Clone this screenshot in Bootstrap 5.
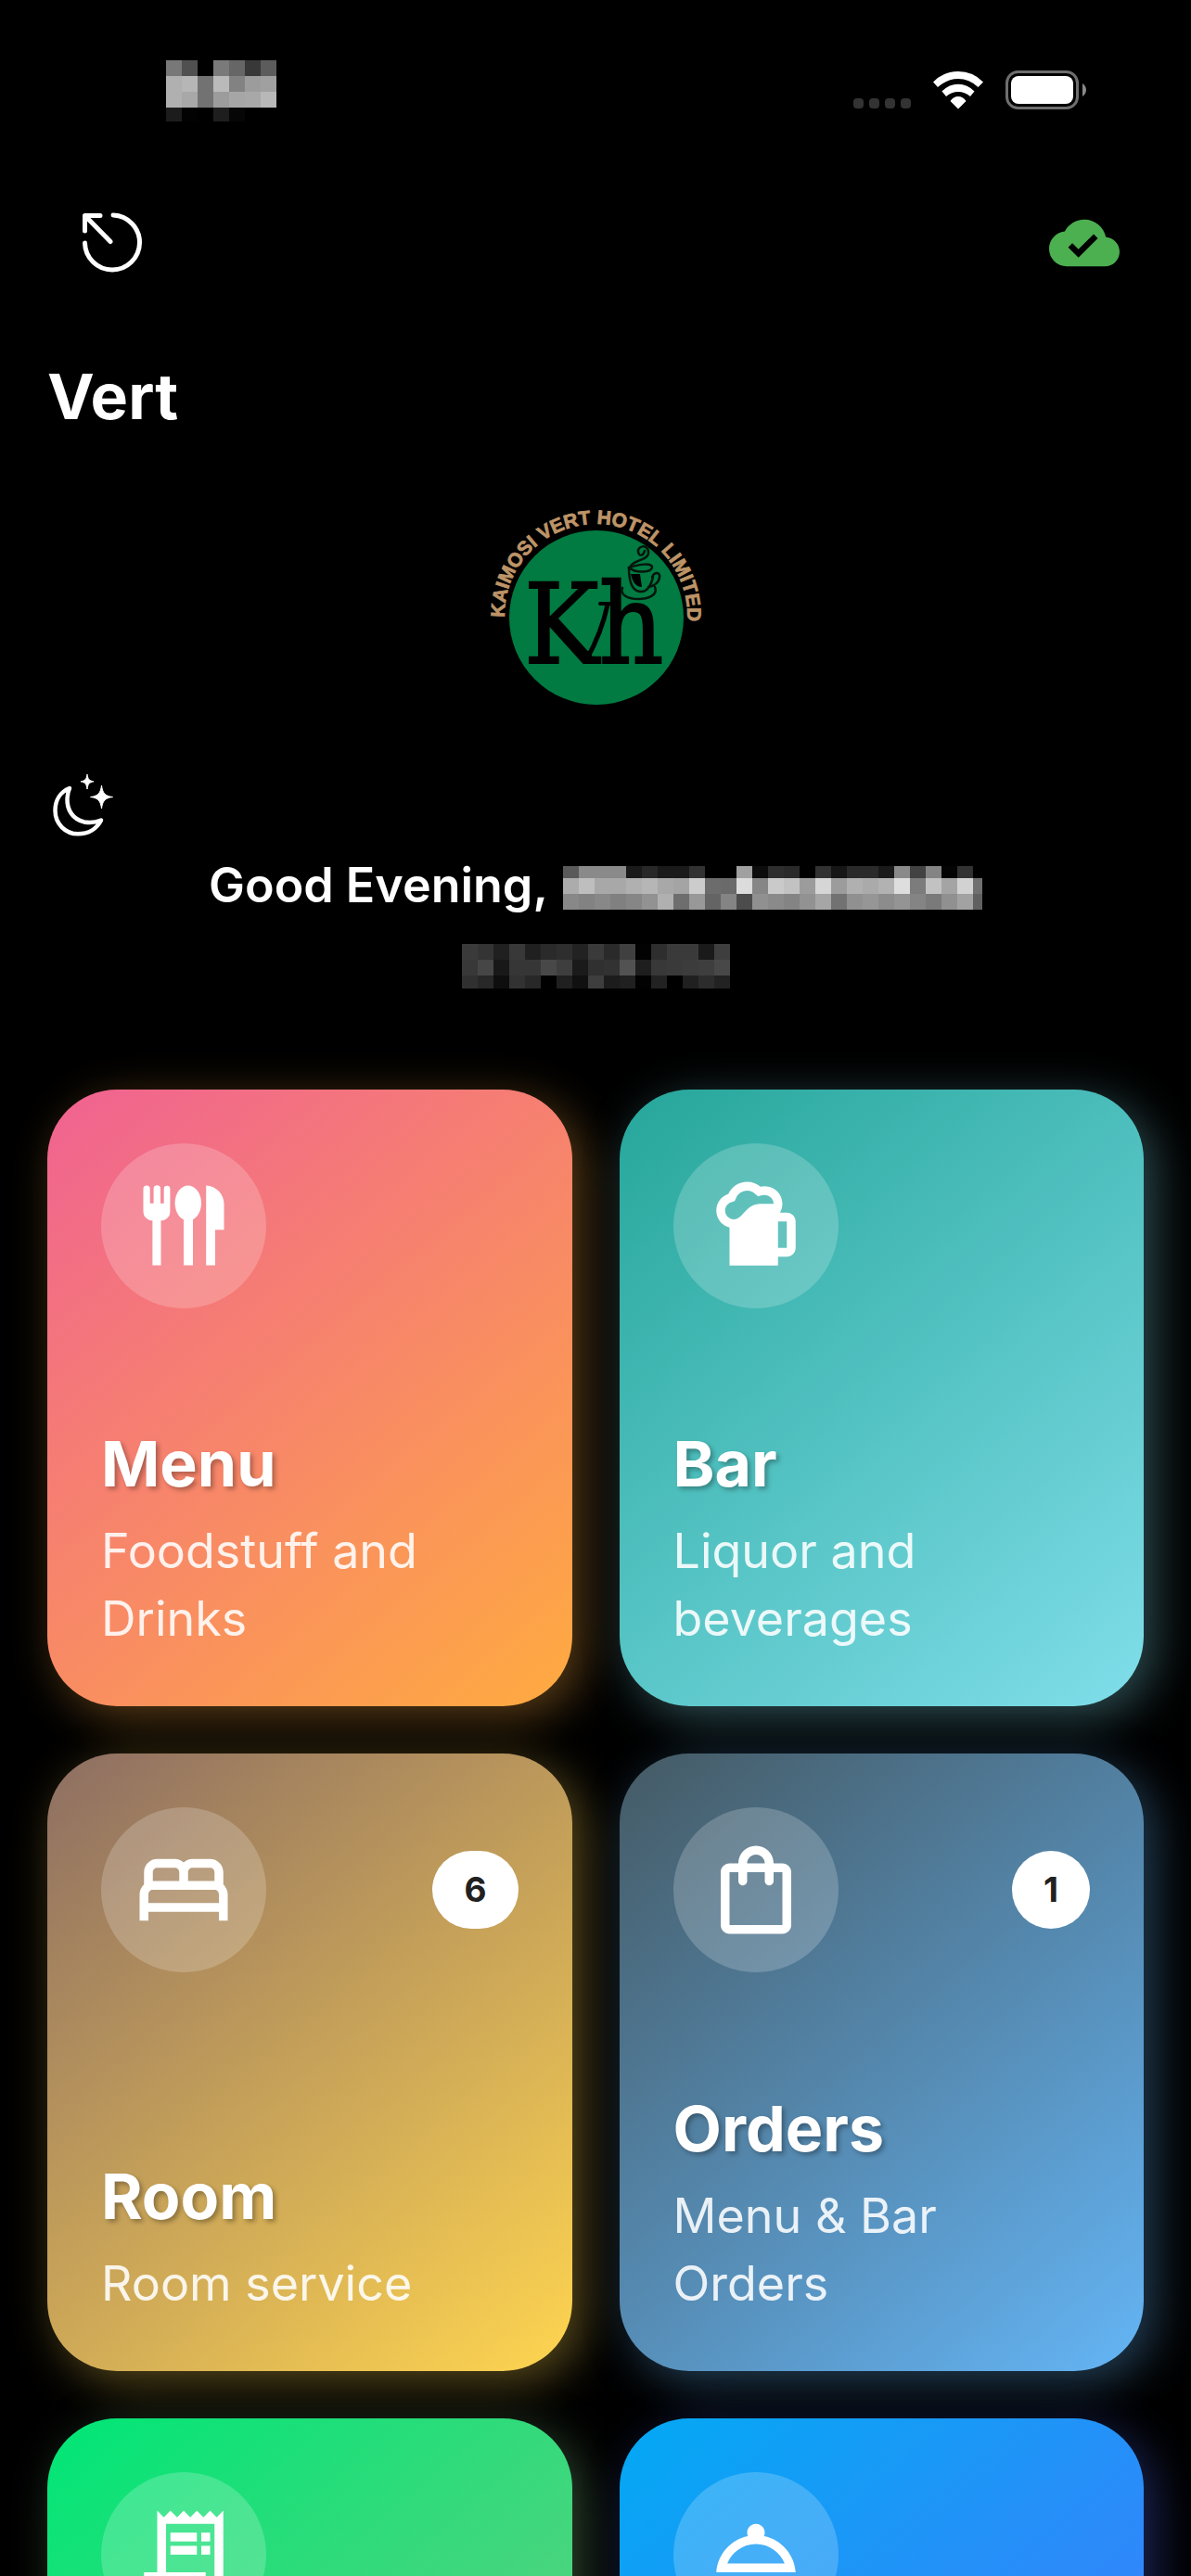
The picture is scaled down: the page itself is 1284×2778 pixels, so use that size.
<!DOCTYPE html>
<html lang="en" data-bs-theme="dark">
<head>
<meta charset="utf-8">
<meta name="viewport" content="width=device-width, initial-scale=1">
<title>Vert</title>
<link href="https://cdn.jsdelivr.net/npm/bootstrap@5.3.0/dist/css/bootstrap.min.css" rel="stylesheet">
<style>
  body { background: #000; color: #fff; font-family: Inter, "Liberation Sans", sans-serif; }
  svg { display: block; flex: none; }
  .screen { overflow-y: auto; scrollbar-width: none; }
  .screen::-webkit-scrollbar { display: none; }

  .status-bar { padding: 65px 113px 0 179px; }
  .signal { gap: 24px; margin-bottom: 2px; }
  .signal-dots { gap: 6px; margin-bottom: 1px; }
  .signal-dots span { width: 11px; height: 11px; border-radius: 4px; background: #333; }

  .app-bar { padding: 93px 77px 0 85px; }
  .icon-btn { background: none; border: 0; padding: 0; color: #fff; }
  .app-title { margin: 84px 0 0; padding: 0 51px; font-size: 68px; line-height: 86px; font-weight: 700; }
  .brand { margin-top: 60px; }
  .night { margin: 51px 0 0 53px; }
  .greeting { margin-top: 18px; gap: 16px; font-size: 52px; line-height: 61px; font-weight: 600; }
  .greeting svg { margin-top: 6px; }
  .clock { margin-top: 33px; }

  .tiles { padding: 109px 51px 51px; }
  .tiles .row { --bs-gutter-x: 51px; --bs-gutter-y: 51px; }
  .tile {
    --bs-card-border-width: 0;
    aspect-ratio: 17 / 20;
    padding: 58px;
    border-radius: 75px;
    color: #fff;
    text-decoration: none;
    background: linear-gradient(140deg, var(--from), var(--to));
    box-shadow: 12px 12px 50px rgba(var(--glow), .35);
  }
  .tile-menu    { --from: #f06292; --to: #ffab40; --glow: 255, 171, 64; }
  .tile-bar     { --from: #26a69a; --to: #80deea; --glow: 128, 222, 234; }
  .tile-room    { --from: #8d6e63; --to: #ffd54f; --glow: 255, 213, 79; }
  .tile-orders  { --from: #455a64; --to: #64b5f6; --glow: 100, 181, 246; }
  .tile-bills   { --from: #00e676; --to: #81c784; --glow: 129, 199, 132; }
  .tile-service { --from: #03a9f4; --to: #536dfe; --glow: 83, 109, 254; }
  .tile-icon { width: 178px; height: 178px; background: rgba(255, 255, 255, .2); }
  .tile-icon svg { width: 114px; height: 114px; fill: #fff; }
  .tile-count { padding: 19px 34px; border-radius: 42px; background: #fff; color: #212121; font-size: 37px; line-height: 46px; font-weight: 700; }
  .tile-name { margin: 0 0 15px; font-size: 68px; line-height: 86px; font-weight: 700; text-shadow: 3px 3px 5px rgba(0, 0, 0, .3); }
  .tile-note { margin: 0; font-size: 52px; line-height: 73px; font-weight: 400; color: rgba(255, 255, 255, .88); }
</style>
<script src="https://cdn.jsdelivr.net/npm/bootstrap@5.3.0/dist/js/bootstrap.bundle.min.js" defer></script>
</head>
<body>
<div class="screen vh-100">

  <header>
    <div class="status-bar d-flex justify-content-between align-items-center">
      <svg class="mosaic" width="119" height="66" role="img" aria-label="Hidden time" data-rows="17,17,17,15"
           data-shades="78 50 00 7a 66 38 5c|b0 b6 72 ba 82 9c a0|b0 a8 72 9c a6 a8 b8|1c 02 00 1e 06 00 00"></svg>
      <div class="signal d-flex align-items-end">
        <div class="signal-dots d-flex"><span></span><span></span><span></span><span></span></div>
        <svg width="54" height="41" viewBox="0 0 54 41" fill="#fff" role="img" aria-label="Wi-Fi">
          <path d="M0 11.5Q11 0 27 0T54 11.5L48.500 17Q39 8 27 8T5 17Z"/>
          <path d="M9.500 21.500Q17 13.700 27 13.700T44.500 21.500L40 27Q34 22 27 22T14 27Z"/>
          <path d="M18.500 32Q22 27 27 27T35.500 32L27 40.500Z"/>
        </svg>
        <svg width="87" height="42" viewBox="0 0 87 42" role="img" aria-label="Battery full">
          <rect x="1.500" y="1.500" width="76" height="39" rx="12" fill="none" stroke="#6e6e6e" stroke-width="3"/>
          <rect x="6" y="6" width="67" height="30" rx="8" fill="#fff"/>
          <path d="M83 14Q87 17 87 21T83 28Z" fill="#8a8a8a"/>
        </svg>
      </div>
    </div>

    <div class="app-bar d-flex justify-content-between align-items-center">
      <button type="button" class="icon-btn" aria-label="Sign out">
        <svg width="72" height="72" viewBox="0 0 72 72" fill="none" stroke="#fff" stroke-width="5" stroke-linecap="round" stroke-linejoin="round">
          <path d="M37 6A29.500 29.500 0 1 1 6.500 36"/>
          <path d="M23 6.500H6.500V23M7 7L34 34.500"/>
        </svg>
      </button>
      <button type="button" class="icon-btn" aria-label="Synced">
        <svg width="76" height="76" viewBox="0 0 24 24" fill="#4caf50" fill-rule="evenodd">
          <path d="M19.350 10.040C18.670 6.590 15.640 4 12 4 9.110 4 6.600 5.640 5.350 8.040 2.340 8.360 0 10.910 0 14c0 3.310 2.690 6 6 6h13c2.760 0 5-2.240 5-5 0-2.640-2.050-4.780-4.650-4.960zM10 17l-3.500-3.500 1.410-1.410L10 14.170 15.180 9l1.410 1.410L10 17z"/>
        </svg>
      </button>
    </div>
    <h1 class="app-title">Vert</h1>
  </header>

  <main>
    <div class="brand d-flex justify-content-center">
      <svg width="264" height="250" viewBox="0 0 264 250" role="img" aria-label="Kaimosi Vert Hotel Limited">
        <defs><path id="rim" d="M34 136A98.500 98.500 0 1 1 224 170"/></defs>
        <circle cx="133" cy="136" r="94" fill="#017b41"/>
        <text font-family="Liberation Sans, sans-serif" font-weight="700" font-size="21" fill="#bd9467" stroke="#bd9467" stroke-width="0.800"><textPath href="#rim">KAIMOSI VERT HOTEL LIMITED</textPath></text>
        <text x="55" y="185" font-family="DejaVu Serif Condensed, DejaVu Serif, serif" font-stretch="condensed" font-size="120" fill="#000" stroke="#000" stroke-width="2">Kh</text>
        <g fill="none" stroke="#000" stroke-linecap="round">
          <path d="M122 182C132 164 140 146 145 122" stroke-width="5"/>
          <path d="M137 121H150" stroke-width="4"/>
        </g>
        <g fill="none" stroke="#05150c" stroke-width="2.500" stroke-linecap="round">
          <path d="M161 104C158 112 168 116 178 116S200 112 196 103"/>
          <path d="M168 82C168 96 171 107 180 108S193 98 194 92"/>
          <path d="M168 82C176 89 192 87 193 82S180 78 168 82"/>
          <path d="M193 92C196 86 202 87 201 93S194 102 189 103"/>
          <path d="M170 80C176 73 190 74 189 65S177 59 178 65 184 69 185 64"/>
        </g>
        <path d="M170 89H180L182 103Q173 103 170 89Z" fill="#000"/>
      </svg>
    </div>

    <svg class="night" width="75" height="75" viewBox="0 0 75 75" role="img" aria-label="Night">
      <path d="M22 19C12 23 6.500 32 6.500 43C6.500 57.500 17.500 68.300 31 68.300C42.500 68.300 51.500 62.500 56 53.500C50 56 44 56.500 38 55.500C26 53 19 43 19.500 30C19.700 26 20.500 22 22 19Z" fill="none" stroke="#fff" stroke-width="4.500" stroke-linejoin="round"/>
      <path d="M56.500 16C57.500 24 60 27.500 68.500 28.500C60 29.500 57.500 33 56.500 41C55.500 33 53 29.500 44.500 28.500C53 27.500 55.500 24 56.500 16Z" fill="#fff" stroke="#fff"/>
      <path d="M41 4C41.700 9 43 11 48 11.800C43 12.500 41.700 15 41 20C40.300 15 39 12.500 34 11.800C39 11 40.300 9 41 4Z" fill="#fff" stroke="#fff"/>
    </svg>

    <div class="greeting d-flex justify-content-center align-items-center">
      <span>Good Evening,</span>
      <svg class="mosaic" width="452" height="47" role="img" aria-label="Hidden name" data-rows="13,17,17"
           data-shades="5a 8a 8a 8a 1a 28 1a 1a 32 00 00 a0 0c 2e 2a 00 32 16 2a 2a 1a 8a 42 84 04 32 00|ac be a8 a8 b0 b6 a8 a4 cc 6c 6a dc 86 ca c2 9c d6 9c b0 aa b2 de 7c c2 a4 d2 70|88 82 88 80 86 92 b0 6e 98 64 84 4c 90 8a 84 92 a6 72 90 96 8c 94 84 7a 90 a2 60"></svg>
    </div>
    <div class="clock d-flex justify-content-center">
      <svg class="mosaic" width="289" height="48" role="img" aria-label="Hidden clock" data-rows="17,17,14"
           data-shades="3a 34 20 38 20 2a 2e 22 3a 2a 40 02 2e 3a 3a 1a 3e|38 46 18 36 36 48 3e 1a 30 32 52 1e 38 3a 3c 3e 48|30 28 0e 32 28 00 20 10 3e 1c 20 02 22 00 20 2c 22"></svg>
    </div>

    <div class="tiles">
      <div class="row row-cols-2">
        <div class="col">
          <a href="#menu" class="card tile tile-menu justify-content-between">
            <div class="d-flex justify-content-between align-items-center">
              <span class="tile-icon rounded-circle d-flex justify-content-center align-items-center">
                <svg viewBox="3 3 114 114">
                  <path d="M16.500 20A3.600 3.600 0 0 1 23.700 20V35.800H27.600V20A3.700 3.700 0 0 1 35 20V35.800H38.700V20A3.350 3.350 0 0 1 45.400 20V45A9.400 9.400 0 0 1 36 54.200H35.500V102.400H26.400V54.200H26A9.500 9.500 0 0 1 16.500 45Z"/>
                  <ellipse cx="64.800" cy="35.500" rx="14.200" ry="19"/>
                  <path d="M60 50H70V102.400H60ZM84.200 16.600C95 17 103.500 26 103.500 36V64.300H94V102.400H84.200Z"/>
                </svg>
              </span>
            </div>
            <div>
              <h2 class="tile-name">Menu</h2>
              <p class="tile-note">Foodstuff and<br>Drinks</p>
            </div>
          </a>
        </div>
        <div class="col">
          <a href="#bar" class="card tile tile-bar justify-content-between">
            <div class="d-flex justify-content-between align-items-center">
              <span class="tile-icon rounded-circle d-flex justify-content-center align-items-center">
                <svg viewBox="0 0 24 24">
                  <path fill-rule="evenodd" d="M19 9h-1.560C17.790 8.410 18 7.730 18 7c0-2.210-1.790-4-4-4-.34 0-.66.05-.98.13C12.200 2.450 11.160 2.020 10 2.020c-1.890 0-3.510 1.110-4.270 2.710C4.150 5.260 3 6.740 3 8.500c0 1.860 1.280 3.410 3 3.860V21h11v-2h2c1.100 0 2-.9 2-2v-6c0-1.100-.9-2-2-2zM7 10.500c-1.100 0-2-.9-2-2 0-.85.55-1.600 1.370-1.880l.8-.27.36-.76C8 4.620 8.940 4.020 10 4.020c.79 0 1.390.35 1.740.65l.78.65S13.160 5 14 5c1.100 0 2 .9 2 2h-3C9.670 7 9.150 10.500 7 10.500zM19 17h-2v-6h2v6z"/>
                </svg>
              </span>
            </div>
            <div>
              <h2 class="tile-name">Bar</h2>
              <p class="tile-note">Liquor and<br>beverages</p>
            </div>
          </a>
        </div>
        <div class="col">
          <a href="#room" class="card tile tile-room justify-content-between">
            <div class="d-flex justify-content-between align-items-center">
              <span class="tile-icon rounded-circle d-flex justify-content-center align-items-center">
                <svg viewBox="0 0 24 24">
                  <path d="M21 10.780V8c0-1.650-1.350-3-3-3h-4c-.77 0-1.470.3-2 .78-.53-.48-1.230-.78-2-.78H6C4.350 5 3 6.350 3 8v2.780c-.61.55-1 1.340-1 2.220v6h2v-2h16v2h2v-6c0-.88-.39-1.670-1-2.220zM14 7h4c.55 0 1 .45 1 1v2h-6V8c0-.55.45-1 1-1zM5 8c0-.55.45-1 1-1h4c.55 0 1 .45 1 1v2H5V8zm-1 7v-2c0-.55.45-1 1-1h14c.55 0 1 .45 1 1v2H4z"/>
                </svg>
              </span>
              <span class="tile-count">6</span>
            </div>
            <div>
              <h2 class="tile-name">Room</h2>
              <p class="tile-note">Room service</p>
            </div>
          </a>
        </div>
        <div class="col">
          <a href="#orders" class="card tile tile-orders justify-content-between">
            <div class="d-flex justify-content-between align-items-center">
              <span class="tile-icon rounded-circle d-flex justify-content-center align-items-center">
                <svg viewBox="0 0 24 24">
                  <path d="M18 6h-2c0-2.210-1.790-4-4-4S8 3.790 8 6H6c-1.100 0-2 .9-2 2v12c0 1.100.9 2 2 2h12c1.100 0 2-.9 2-2V8c0-1.100-.9-2-2-2zm-6-2c1.100 0 2 .9 2 2h-4c0-1.100.9-2 2-2zm6 16H6V8h2v2c0 .55.45 1 1 1s1-.45 1-1V8h4v2c0 .55.45 1 1 1s1-.45 1-1V8h2v12z"/>
                </svg>
              </span>
              <span class="tile-count">1</span>
            </div>
            <div>
              <h2 class="tile-name">Orders</h2>
              <p class="tile-note">Menu &amp; Bar<br>Orders</p>
            </div>
          </a>
        </div>
        <div class="col">
          <a href="#bills" class="card tile tile-bills" aria-label="Receipts">
            <span class="tile-icon rounded-circle d-flex justify-content-center align-items-center">
              <svg viewBox="0 0 24 24">
                <path d="M19.500 3.500L18 2l-1.500 1.500L15 2l-1.500 1.500L12 2l-1.500 1.500L9 2 7.500 3.500 6 2v14H3v3c0 1.660 1.340 3 3 3h12c1.660 0 3-1.340 3-3V2l-1.500 1.500zM15 20H6c-.55 0-1-.45-1-1v-1h10v2zm4-1c0 .55-.45 1-1 1s-1-.45-1-1v-3H8V5h11v14zM9 7h6v2H9zM16 7h2v2h-2zM9 10h6v2H9zM16 10h2v2h-2z"/>
              </svg>
            </span>
          </a>
        </div>
        <div class="col">
          <a href="#service" class="card tile tile-service" aria-label="Service">
            <span class="tile-icon rounded-circle d-flex justify-content-center align-items-center">
              <svg viewBox="0 0 24 24">
                <path d="M13.840 7.790c.1-.24.16-.51.16-.79 0-1.100-.9-2-2-2s-2 .9-2 2c0 .28.06.55.16.79C6.250 8.600 3.270 11.930 3 16h18c-.27-4.070-3.250-7.400-7.160-8.210zM12 9.580c2.950 0 5.470 1.830 6.500 4.420h-13c1.030-2.590 3.550-4.420 6.500-4.420zM2 17h20v2H2z"/>
              </svg>
            </span>
          </a>
        </div>
      </div>
    </div>
  </main>
</div>

<script>
  // Draws each redacted field as a mosaic of grey cells, 17px wide.
  document.querySelectorAll('.mosaic').forEach(function (svg) {
    var heights = svg.dataset.rows.split(',').map(Number), y = 0;
    svg.dataset.shades.split('|').forEach(function (line, r) {
      line.split(' ').forEach(function (s, c) {
        var cell = document.createElementNS('http://www.w3.org/2000/svg', 'rect');
        cell.setAttribute('x', c * 17);
        cell.setAttribute('y', y);
        cell.setAttribute('width', 17);
        cell.setAttribute('height', heights[r]);
        cell.setAttribute('fill', '#' + s + s + s);
        svg.appendChild(cell);
      });
      y += heights[r];
    });
  });
</script>
</body>
</html>
